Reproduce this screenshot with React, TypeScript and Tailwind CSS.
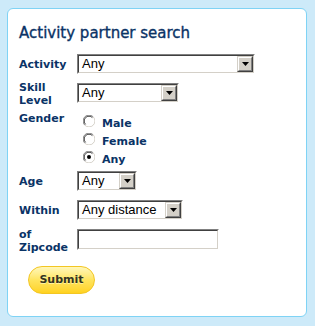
import React from "react";

const font = "font-['DejaVu_Sans',Verdana,sans-serif]";

/* classic win select */
function Select({ w, value }: { w: string; value: string }) {
  return (
    <div className={`${w} h-[20px] border border-t-[#808080] border-l-[#808080] border-b-[#ffffff] border-r-[#ffffff]`}>
      <div className="h-full flex border border-t-[#404040] border-l-[#404040] border-b-[#d4d0c8] border-r-[#d4d0c8] bg-white">
        <div className="flex-1 pl-[3px] text-[13px] leading-[16px] text-black font-['Liberation_Sans',Arial,sans-serif] overflow-hidden whitespace-nowrap">
          {value}
        </div>
        <ArrowBtn />
      </div>
    </div>
  );
}

function ArrowBtn() {
  return (
    <div className="w-[16px] h-[16px] border border-t-[#d4d0c8] border-l-[#d4d0c8] border-b-[#404040] border-r-[#404040]">
      <div className="w-full h-full bg-[#d4d0c8] border border-t-white border-l-white border-b-[#808080] border-r-[#808080] flex items-center justify-center">
        <svg width="7" height="4" viewBox="0 0 7 4">
          <polygon points="0,0 7,0 3.5,4" fill="#000" />
        </svg>
      </div>
    </div>
  );
}

function Radio({ checked }: { checked?: boolean }) {
  return (
    <svg width="12" height="12" viewBox="0 0 12 12">
      <circle cx="6" cy="6" r="5.5" fill="#fff" />
      <path d="M1.8 10.2 A5.5 5.5 0 0 1 10.2 1.8" stroke="#808080" strokeWidth="1" fill="none" />
      <path d="M10.2 1.8 A5.5 5.5 0 0 1 1.8 10.2" stroke="#d4d0c8" strokeWidth="1" fill="none" />
      <path d="M2.6 9.4 A4.5 4.5 0 0 1 9.4 2.6" stroke="#404040" strokeWidth="1" fill="none" />
      {checked && <circle cx="6" cy="6" r="2" fill="#000" />}
    </svg>
  );
}

function Label({ children, className = "" }: any) {
  return (
    <div className={`w-[58px] shrink-0 text-[11px] leading-[13px] font-bold text-[#0a3366] ${className}`}>
      {children}
    </div>
  );
}

export default function App() {
  return (
    <div className={`w-[315px] h-[326px] bg-[#cdeaf9] pt-[8px] pl-[7px] ${font}`}>
      <div className="w-[300px] h-[309px] bg-white border border-[#7fd3f5] rounded-[6px] pt-[15px] pl-[11px] flex flex-col">
        <h1 className="text-[15px] leading-[18px] text-[#0a3366] [-webkit-text-stroke:0.35px_#0a3366]">Activity partner search</h1>

        <div className="flex items-center mt-[12px]">
          <Label>Activity</Label>
          <Select w="w-[178px]" value="Any" />
        </div>

        <div className="flex items-start mt-[9px]">
          <Label className="-mt-[2px]">Skill<br />Level</Label>
          <Select w="w-[102px]" value="Any" />
        </div>

        <div className="flex items-start mt-[5px]">
          <Label>Gender</Label>
          <div className="flex flex-col pl-[6px]">
            {[
              ["Male", false],
              ["Female", false],
              ["Any", true],
            ].map(([t, c]: any) => (
              <div key={t} className="flex items-start h-[18px]">
                <div className="mt-[3px]"><Radio checked={c} /></div>
                <span className="ml-[7px] mt-[5px] text-[11px] leading-[13px] font-bold text-[#0a3366]">{t}</span>
              </div>
            ))}
          </div>
        </div>

        <div className="flex items-center mt-[5px]">
          <Label>Age</Label>
          <Select w="w-[60px]" value="Any" />
        </div>

        <div className="flex items-center mt-[9px]">
          <Label>Within</Label>
          <Select w="w-[106px]" value="Any distance" />
        </div>

        <div className="flex items-start mt-[9px]">
          <Label className="-mt-[1px]">of<br />Zipcode</Label>
          <div className="w-[142px] h-[21px] border border-t-[#808080] border-l-[#808080] border-b-white border-r-white">
            <div className="h-full bg-white border border-t-[#404040] border-l-[#404040] border-b-[#d4d0c8] border-r-[#d4d0c8]" />
          </div>
        </div>

        <div className="mt-[12px] ml-[9px]">
          <button className="w-[67px] h-[28px] rounded-full border border-[#f3c623] bg-gradient-to-b from-[#fff7b8] via-[#ffe45c] to-[#ffd21c] text-[11px] font-bold text-[#333322] [text-shadow:0_1px_0_#fff3a0]">
            Submit
          </button>
        </div>
      </div>
    </div>
  );
}
